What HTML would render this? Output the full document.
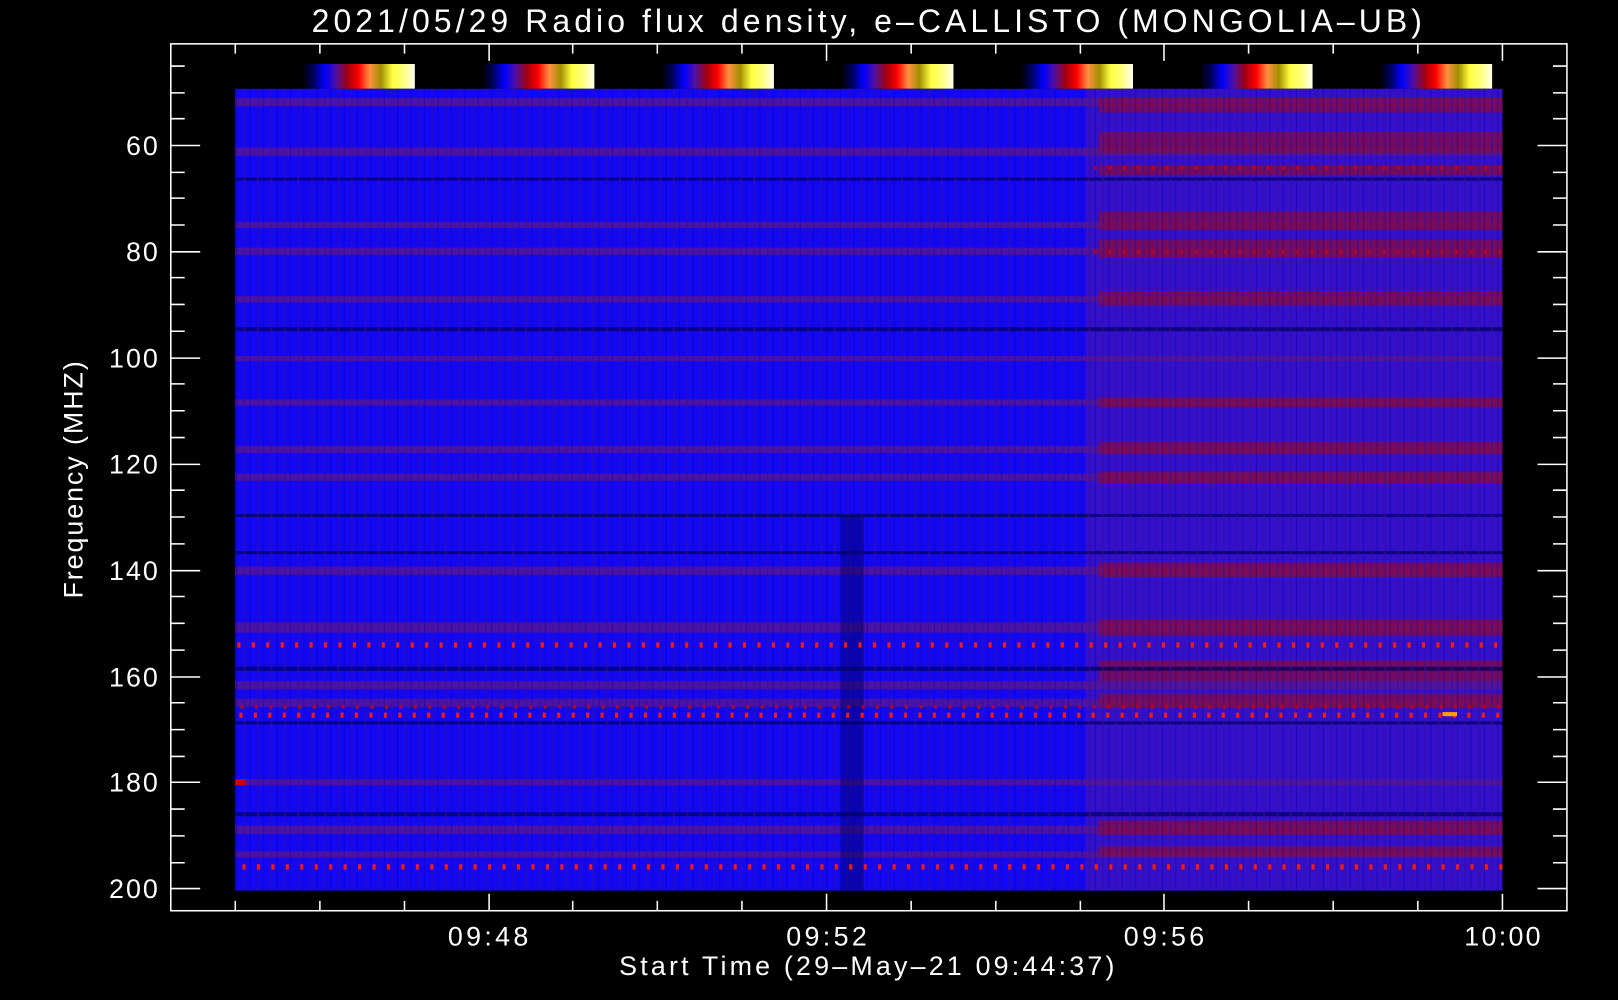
<!DOCTYPE html>
<html><head><meta charset="utf-8"><style>
html,body{margin:0;padding:0;background:#000;width:1618px;height:1000px;overflow:hidden}
svg{display:block}
text{font-family:"Liberation Sans",sans-serif;fill:#fff}
</style></head><body>
<svg width="1618" height="1000" viewBox="0 0 1568 969" preserveAspectRatio="none">
<defs>
<linearGradient id="cb" x1="0" x2="1">
<stop offset="0" stop-color="#000"/><stop offset="0.1" stop-color="#000060"/><stop offset="0.2" stop-color="#0000ff"/><stop offset="0.3" stop-color="#5010a0"/><stop offset="0.4" stop-color="#a00010"/><stop offset="0.5" stop-color="#ff0000"/><stop offset="0.6" stop-color="#ff9040"/><stop offset="0.7" stop-color="#a09000"/><stop offset="0.8" stop-color="#ffff40"/><stop offset="0.9" stop-color="#ffff80"/><stop offset="1" stop-color="#fffff0"/>
</linearGradient>
<pattern id="vn" width="13" height="10" patternUnits="userSpaceOnUse">
<rect width="13" height="10" fill="none"/><rect x="2" width="2" height="10" fill="#3010a0" opacity="0.5"/><rect x="8" width="1" height="10" fill="#000090" opacity="0.4"/>
</pattern>
</defs>
<rect width="1568" height="969" fill="#000"/>
<text x="302" y="31" font-size="31" textLength="1076" lengthAdjust="spacing">2021/05/29  Radio flux density, e–CALLISTO (MONGOLIA–UB)</text>
<g fill="url(#cb)">
<rect x="293" y="62" width="109" height="24"/><rect x="467" y="62" width="109" height="24"/><rect x="641" y="62" width="109" height="24"/><rect x="815" y="62" width="109" height="24"/><rect x="989" y="62" width="109" height="24"/><rect x="1163" y="62" width="109" height="24"/><rect x="1337" y="62" width="109" height="24"/>
</g>
<rect x="228" y="86" width="1228" height="777" fill="#1408f4"/>
<rect x="1052" y="86" width="404" height="777" fill="#5a1a9a" opacity="0.45"/>
<g fill="#5a1590" opacity="0.8">
<rect x="228" y="95" width="1228" height="8"/><rect x="228" y="143" width="1228" height="8"/><rect x="228" y="215" width="1228" height="6"/><rect x="228" y="240" width="1228" height="7"/><rect x="228" y="287" width="1228" height="6"/><rect x="228" y="345" width="1228" height="5"/><rect x="228" y="387" width="1228" height="6"/><rect x="228" y="432" width="1228" height="7"/><rect x="228" y="459" width="1228" height="7"/><rect x="228" y="549" width="1228" height="8"/><rect x="228" y="603" width="1228" height="10"/><rect x="228" y="660" width="1228" height="8"/><rect x="228" y="677" width="1228" height="8"/><rect x="228" y="755" width="1228" height="6"/><rect x="228" y="800" width="1228" height="8"/><rect x="228" y="825" width="1228" height="6"/>
</g>
<g fill="#8a0a40" opacity="0.75">
<rect x="1065" y="95" width="391" height="14"/><rect x="1065" y="128" width="391" height="20"/><rect x="1065" y="160" width="391" height="10"/><rect x="1065" y="205" width="391" height="18"/><rect x="1065" y="232" width="391" height="18"/><rect x="1065" y="282" width="391" height="14"/><rect x="1065" y="385" width="391" height="10"/><rect x="1065" y="428" width="391" height="12"/><rect x="1065" y="457" width="391" height="12"/><rect x="1065" y="545" width="391" height="14"/><rect x="1065" y="600" width="391" height="16"/><rect x="1065" y="640" width="391" height="20"/><rect x="1065" y="672" width="391" height="14"/><rect x="1065" y="795" width="391" height="14"/><rect x="1065" y="820" width="391" height="10"/>
</g>
<g fill="#00005a" opacity="0.7">
<rect x="228" y="172" width="1228" height="3"/><rect x="228" y="317" width="1228" height="4"/><rect x="228" y="498" width="1228" height="3"/><rect x="228" y="534" width="1228" height="3"/><rect x="228" y="646" width="1228" height="4"/><rect x="228" y="699" width="1228" height="3"/><rect x="228" y="787" width="1228" height="4"/>
</g>
<rect x="228" y="86" width="1228" height="777" fill="url(#vn)"/>
<rect x="815" y="500" width="22" height="363" fill="#000060" opacity="0.45"/>
<g stroke="#ff1a00" stroke-width="5" stroke-dasharray="3 11">
<line x1="230" y1="625" x2="1456" y2="625"/><line x1="232" y1="693" x2="1456" y2="693"/><line x1="235" y1="840" x2="1456" y2="840"/>
</g>
<g stroke="#e00000" stroke-width="4" stroke-dasharray="3 11" opacity="0.6">
<line x1="233" y1="685" x2="1456" y2="685"/><line x1="1060" y1="163" x2="1456" y2="163"/><line x1="1060" y1="244" x2="1456" y2="244"/>
</g>
<rect x="1398" y="690" width="14" height="4" fill="#ffa000"/>
<rect x="228" y="755" width="10" height="6" fill="#d00000"/>
<g stroke="#fff" stroke-width="1.5" fill="none">
<rect x="165.5" y="42.5" width="1353" height="840"/>
</g>
<g stroke="#fff" stroke-width="1.5">
<path d="M165 64h14M165 90h14M165 115h14M165 141h29M165 167h14M165 192h14M165 218h14M165 244h29M165 269h14M165 295h14M165 321h14M165 347h29M165 372h14M165 398h14M165 424h14M165 450h29M165 475h14M165 501h14M165 527h14M165 553h29M165 578h14M165 604h14M165 630h14M165 656h29M165 681h14M165 707h14M165 733h14M165 758h29M165 784h14M165 810h14M165 836h14M165 861h29"/>
<path d="M1519 64h-14M1519 90h-14M1519 115h-14M1519 141h-29M1519 167h-14M1519 192h-14M1519 218h-14M1519 244h-29M1519 269h-14M1519 295h-14M1519 321h-14M1519 347h-29M1519 372h-14M1519 398h-14M1519 424h-14M1519 450h-29M1519 475h-14M1519 501h-14M1519 527h-14M1519 553h-29M1519 578h-14M1519 604h-14M1519 630h-14M1519 656h-29M1519 681h-14M1519 707h-14M1519 733h-14M1519 758h-29M1519 784h-14M1519 810h-14M1519 836h-14M1519 861h-29"/>
<path d="M228 42v10M310 42v10M392 42v10M474 42v17M555 42v10M637 42v10M719 42v10M801 42v17M883 42v10M965 42v10M1047 42v10M1128 42v17M1210 42v10M1292 42v10M1374 42v10M1456 42v17"/>
<path d="M228 883v-10M310 883v-10M392 883v-10M474 883v-17M555 883v-10M637 883v-10M719 883v-10M801 883v-17M883 883v-10M965 883v-10M1047 883v-10M1128 883v-17M1210 883v-10M1292 883v-10M1374 883v-10M1456 883v-17"/>
</g>
<g font-size="26" text-anchor="end" letter-spacing="2">
<text x="155" y="150">60</text><text x="155" y="253">80</text><text x="155" y="356">100</text><text x="155" y="459">120</text><text x="155" y="562">140</text><text x="155" y="665">160</text><text x="155" y="767">180</text><text x="155" y="870">200</text>
</g>
<g font-size="26">
<text x="434" y="916" textLength="78" lengthAdjust="spacing">09:48</text>
<text x="762" y="916" textLength="78" lengthAdjust="spacing">09:52</text>
<text x="1089" y="916" textLength="78" lengthAdjust="spacing">09:56</text>
<text x="1419" y="916" textLength="74" lengthAdjust="spacing">10:00</text>
<text x="600" y="945" textLength="480" lengthAdjust="spacing">Start Time (29–May–21 09:44:37)</text>
<text transform="translate(80,580) rotate(-90)" textLength="230" lengthAdjust="spacing">Frequency (MHZ)</text>
</g>
</svg>
</body></html>
